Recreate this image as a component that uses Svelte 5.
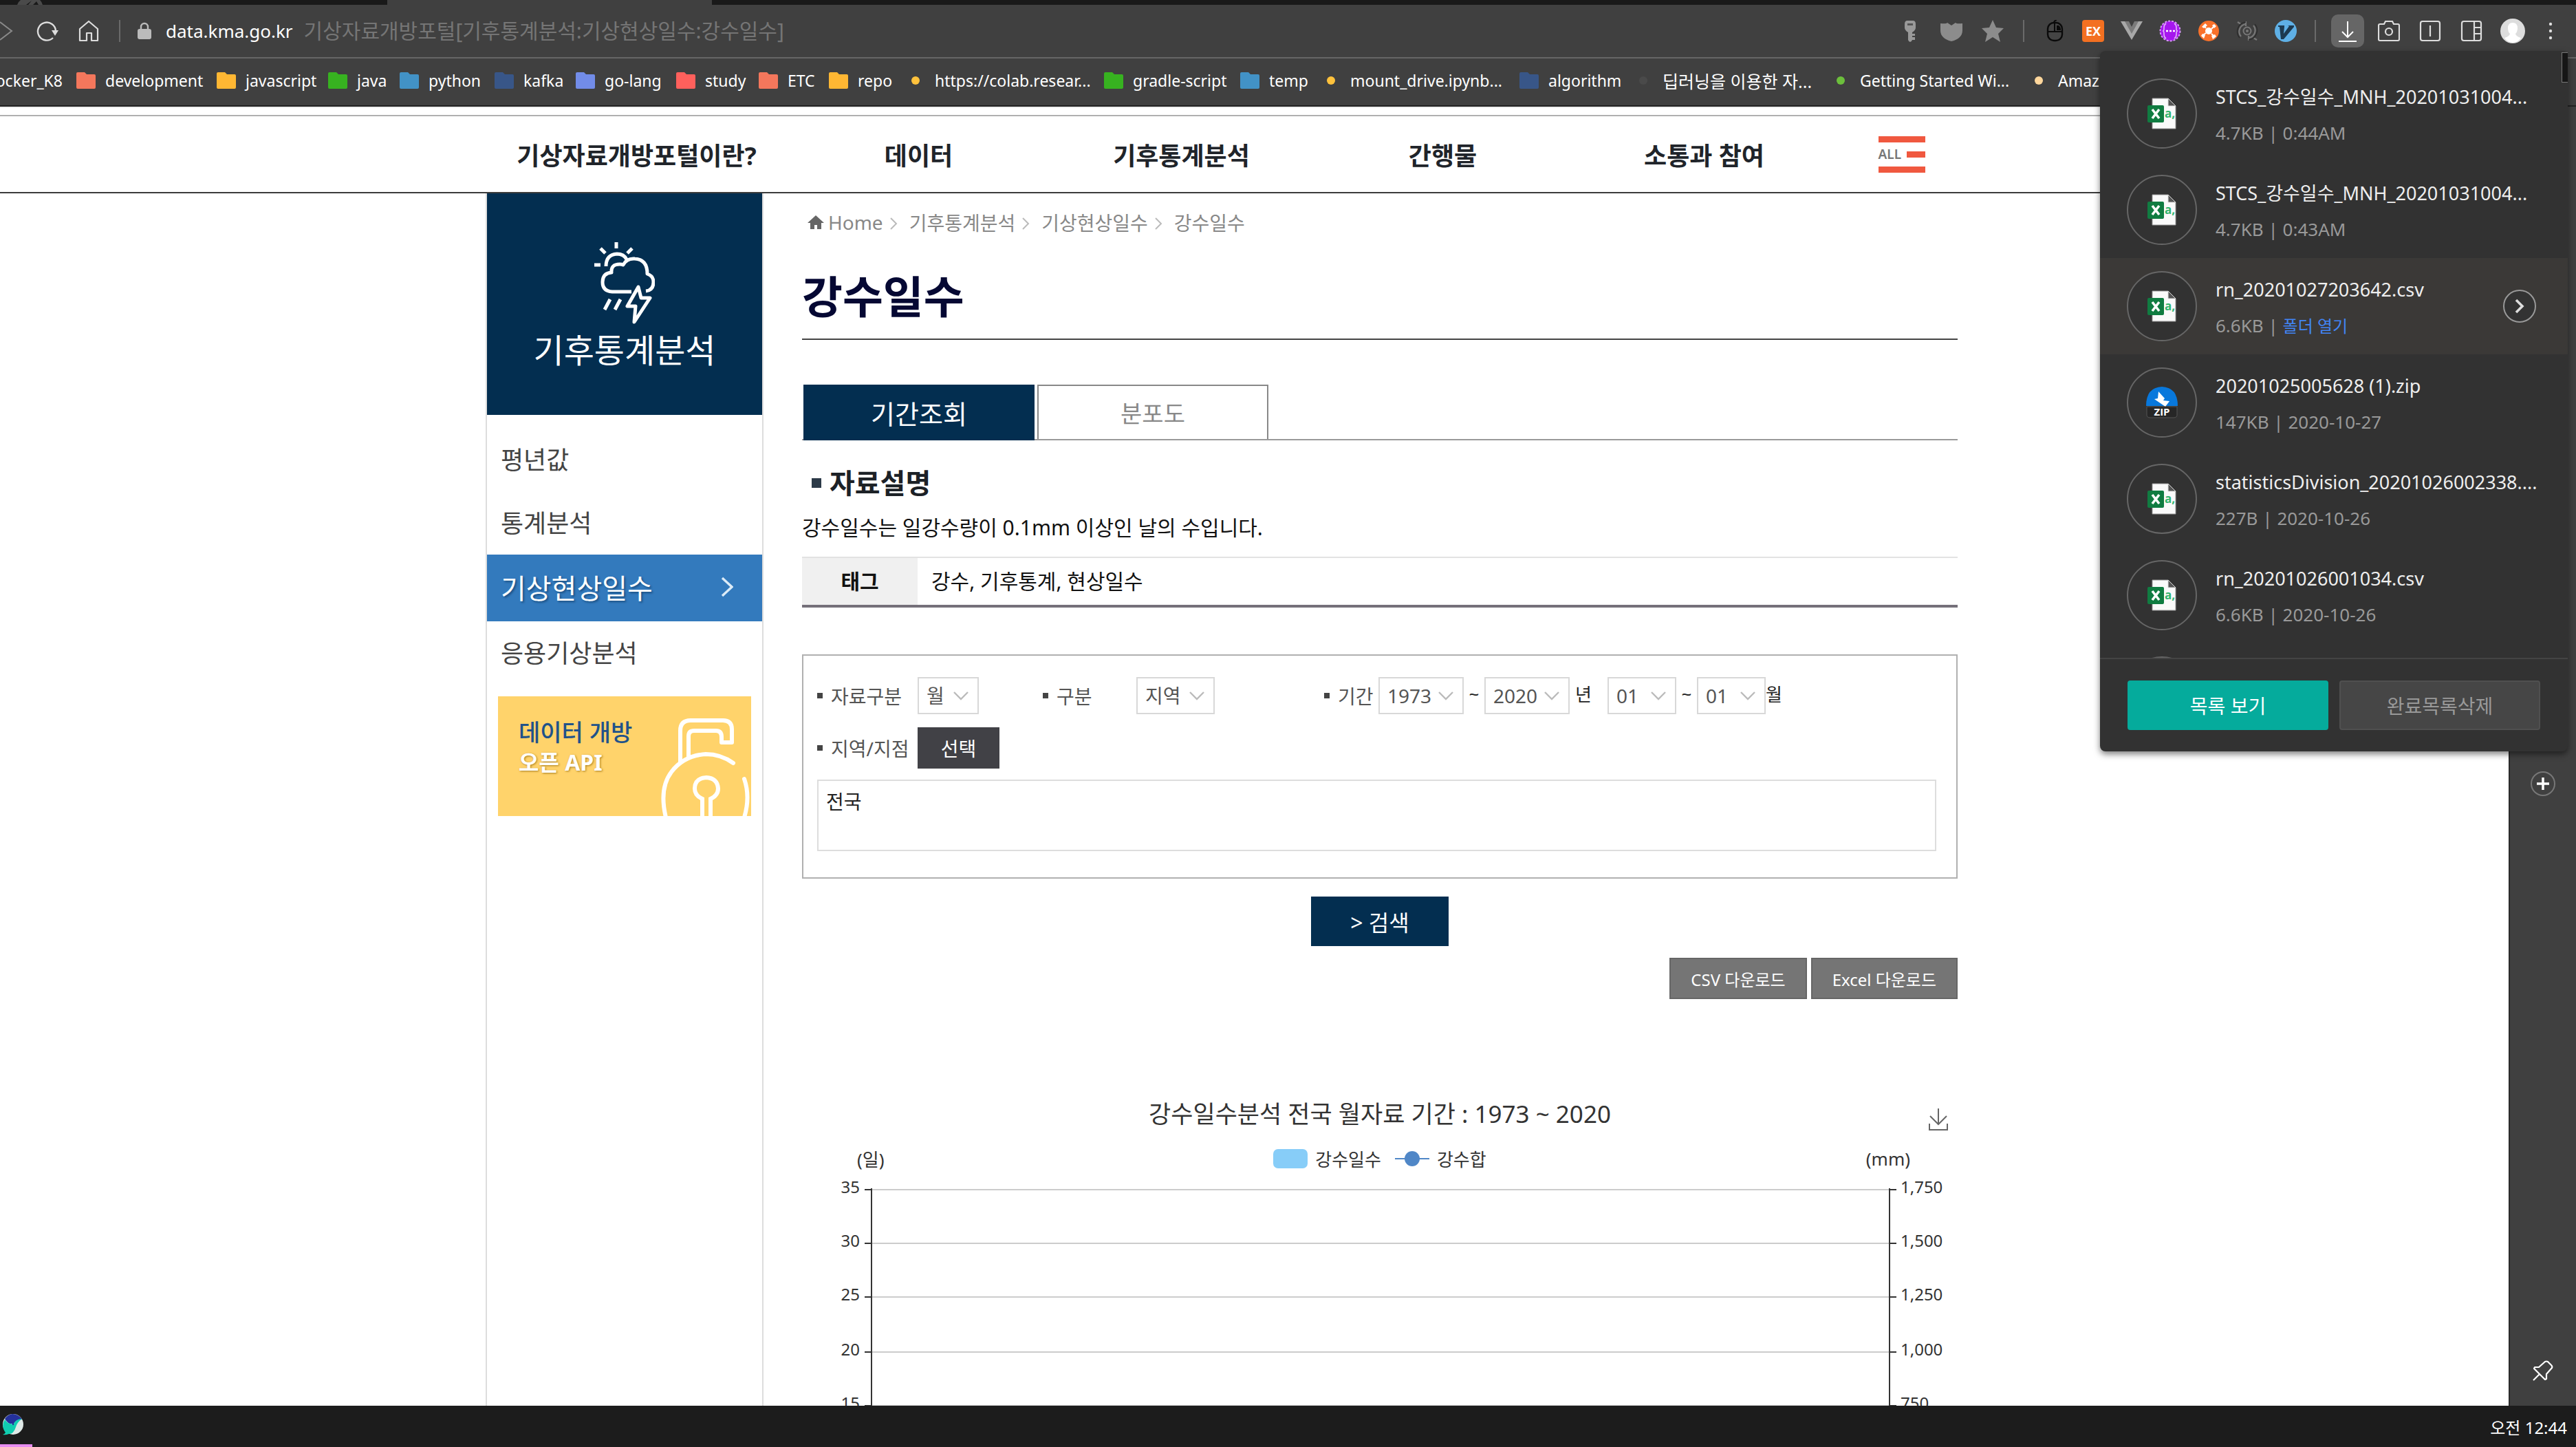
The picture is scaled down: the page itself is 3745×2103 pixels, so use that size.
<script>
  const bookmarks = [
    { label: 'ocker_K8', kind: 'none' },
    { label: 'development', kind: 'folder', color: '#f4775c' },
    { label: 'javascript', kind: 'folder', color: '#ffb733' },
    { label: 'java', kind: 'folder', color: '#37b220' },
    { label: 'python', kind: 'folder', color: '#4292c6' },
    { label: 'kafka', kind: 'folder', color: '#385688' },
    { label: 'go-lang', kind: 'folder', color: '#728ce8' },
    { label: 'study', kind: 'folder', color: '#ff605c' },
    { label: 'ETC', kind: 'folder', color: '#f4775c' },
    { label: 'repo', kind: 'folder', color: '#ffb733' },
    { label: 'https://colab.resear...', kind: 'dot', color: '#ffc23c' },
    { label: 'gradle-script', kind: 'folder', color: '#37b220' },
    { label: 'temp', kind: 'folder', color: '#4292c6' },
    { label: 'mount_drive.ipynb...', kind: 'dot', color: '#ffc23c' },
    { label: 'algorithm', kind: 'folder', color: '#385688' },
    { label: '딥러닝을 이용한 자...', kind: 'dot wide', color: '#4a4a4a' },
    { label: 'Getting Started Wi...', kind: 'dot', color: '#6cbf3c' },
    { label: 'Amaz', kind: 'dot', color: '#ffd79c' }
  ];

  const menus = ['기상자료개방포털이란?', '데이터', '기후통계분석', '간행물', '소통과 참여'];
  const crumbs = ['기후통계분석', '기상현상일수', '강수일수'];
  const sideItems = [
    { label: '평년값' },
    { label: '통계분석' },
    { label: '기상현상일수', active: true },
    { label: '응용기상분석' }
  ];

  const files = [
    { name: 'STCS_강수일수_MNH_20201031004...', size: '4.7KB', when: '0:44AM', type: 'csv' },
    { name: 'STCS_강수일수_MNH_20201031004...', size: '4.7KB', when: '0:43AM', type: 'csv' },
    { name: 'rn_20201027203642.csv', size: '6.6KB', type: 'csv', hover: true },
    { name: '20201025005628 (1).zip', size: '147KB', when: '2020-10-27', type: 'zip' },
    { name: 'statisticsDivision_20201026002338....', size: '227B', when: '2020-10-26', type: 'csv' },
    { name: 'rn_20201026001034.csv', size: '6.6KB', when: '2020-10-26', type: 'csv' }
  ];

  const ticks = [
    { left: '35', right: '1,750' },
    { left: '30', right: '1,500' },
    { left: '25', right: '1,250' },
    { left: '20', right: '1,000' },
    { left: '15', right: '750' }
  ].map((t, i) => ({ ...t, y: 28 + i * 78 + (i > 2 ? 2 : 0) }));
</script>

{#snippet pick(id, name, value, cls)}
  <span class="pick {cls}">
    <select {id} aria-label={name}><option>{value}</option></select>
    <svg viewBox="0 0 22 14" aria-hidden="true"><path d="M1 2l10 10L21 2" fill="none" stroke="#bbb" stroke-width="2.4" /></svg>
  </span>
{/snippet}

<div class="window">
  <div class="tabstrip">
    <svg class="tab-logo" viewBox="0 0 40 7" aria-hidden="true"><path d="M1 7q2-5 5-7h28q3 3 4 7h-6l-3-5-5 5h-7l5-6-8 6z" fill="#4a4a4a" /></svg>
    <div class="tab-active"></div>
  </div>

  <header class="toolbar">
    <button class="tb fwd" aria-label="앞으로"><svg viewBox="0 0 20 30"><path d="M0 2l17 13L0 28" fill="none" stroke="#8a8a8a" stroke-width="2" /></svg></button>
    <button class="tb" aria-label="새로고침"><svg class="i32" viewBox="0 0 32 32"><path d="M24 26A13 13 0 1 1 28 16" fill="none" stroke="#ddd" stroke-width="2.4" /><path d="M22 15h10l-5 8z" fill="#ddd" /></svg></button>
    <button class="tb" aria-label="홈"><svg class="i32" viewBox="0 0 32 32"><path d="M3 13L16 2l13 11v17h-9V19h-7v11H3z" fill="none" stroke="#ddd" stroke-width="2.2" stroke-linejoin="round" /></svg></button>
    <i class="divider"></i>
    <svg class="lock" viewBox="0 0 20 26" aria-hidden="true"><path d="M5 12V7a5 5 0 0 1 10 0v5" fill="none" stroke="#bbb" stroke-width="2.4" /><rect y="10" width="20" height="15" rx="3" fill="#bbb" /></svg>
    <div class="url"><span>data.kma.go.kr</span><span class="url-title">기상자료개방포털[기후통계분석:기상현상일수:강수일수]</span></div>

    <div class="tools">
      <button class="tool" aria-label="비밀번호"><svg class="i32" viewBox="0 0 32 32"><path d="M12 1h8q4 0 4 5v5q0 4-5 7v2h4v3h-4v2h4v4h-4q-1 3-3 3t-3-3V18q-5-3-5-7V6q0-5 4-5z" fill="#999" /><rect x="12" y="5" width="8" height="3" fill="#555" /></svg></button>
      <button class="tool" aria-label="보호"><svg class="i32" viewBox="0 0 32 32"><path d="M0 5q9 1 10-1l6 4 6-4q1 2 10 1v10q0 12-16 16Q0 27 0 15z" fill="#8c8c8c" /></svg></button>
      <button class="tool" aria-label="즐겨찾기"><svg class="i32" viewBox="0 0 32 32"><path d="M16 0l5 11 11 1-8 8 3 12-11-7-11 7 3-12-8-8 11-1z" fill="#8c8c8c" /></svg></button>
      <i class="divider wide"></i>
      <button class="tool ext" aria-label="마우스 제스처"><svg class="i32" viewBox="0 0 32 32"><rect x="6" y="4" width="21" height="26" rx="9" fill="#444" stroke="#0a0a0a" stroke-width="2.4" /><path d="M16 5v12M6 17h21M15 4q0-3 4-4" fill="none" stroke="#0a0a0a" stroke-width="2" /><path d="M19 8h3q3 2 3 7h-6z" fill="#0a0a0a" /></svg></button>
      <button class="tool ext" aria-label="EX"><span class="ex">EX</span></button>
      <button class="tool ext" aria-label="Vue"><svg class="i32" viewBox="0 0 32 32"><path d="M0 2h9l7 13 7-13h9L16 29z" fill="#a8a8a8" /><path d="M6 2h6l4 8 4-8h6L16 20z" fill="#7b7b7b" /></svg></button>
      <button class="tool ext" aria-label="확장 프로그램"><svg class="i32" viewBox="0 0 32 32"><circle cx="16" cy="16" r="14.5" fill="#a617ee" stroke="#d69af5" stroke-width="2" stroke-dasharray="3 2" /><path d="M10 5q-3 2-3 6v2q0 3-2 3 2 0 2 3v2q0 4 3 6M22 5q3 2 3 6v2q0 3 2 3-2 0-2 3v2q0 4-3 6" fill="none" stroke="#e0b0f8" stroke-width="1.6" /><path d="M10 16h3m2 0h3m2 0h3" stroke="#fff" stroke-width="2.6" /></svg></button>
      <button class="tool ext" aria-label="확장 프로그램 2"><svg class="i32" viewBox="0 0 32 32"><circle cx="16" cy="16" r="15" fill="#f9712a" /><circle cx="16" cy="16" r="5" fill="#fff" /><path d="M12 12L9 8M20 13l3-3M12 19l-4 3M20 20l3 3" stroke="#fff" stroke-width="2" /><path d="M6 10l5-5 3 3-5 4zM21 8l3-2 3 3-3 3zM7 20l4 2-2 5-4-4zM20 23l5-2 2 3-5 4z" fill="#fff" /></svg></button>
      <button class="tool ext" aria-label="동기화"><svg class="i32" viewBox="0 0 32 32"><circle cx="16" cy="16" r="5.5" fill="none" stroke="#777" stroke-width="2" /><circle cx="16" cy="16" r="2" fill="#777" /><path d="M14 2v7M14 6A11 11 0 0 0 7 24M2 3l5 3M18 30v-7M18 26A11 11 0 0 0 25 8M30 29l-5-3" fill="none" stroke="#777" stroke-width="2.2" /><path d="M14 3A14 14 0 0 0 5 26M18 29A14 14 0 0 0 27 6" fill="none" stroke="#2c2c2c" stroke-width="1.4" /></svg></button>
      <button class="tool ext" aria-label="V"><svg class="i32" viewBox="0 0 32 32"><circle cx="16" cy="16" r="16" fill="#5fb0e6" /><path d="M5 8h9v2l-1 10 8-11-2-1h9v2L13 28h-4L7 10H5z" fill="#1d3a50" /></svg></button>
      <i class="divider wide"></i>
      <button class="tool on" aria-label="다운로드"><svg class="i32" viewBox="0 0 32 32"><path d="M16 2v23M8 17l8 8 8-8M3 31h26" fill="none" stroke="#fff" stroke-width="2" /></svg></button>
      <button class="tool" aria-label="캡처"><svg class="i32" viewBox="0 0 32 32"><path d="M3 6h6l2-4h10l2 4h6q2 0 2 2v20q0 2-2 2H3q-2 0-2-2V8q0-2 2-2z" fill="none" stroke="#ddd" stroke-width="2.2" /><circle cx="16" cy="17" r="5" fill="none" stroke="#ddd" stroke-width="2.2" /></svg></button>
      <button class="tool" aria-label="듀얼탭"><svg class="i32" viewBox="0 0 32 32"><rect x="2" y="2" width="28" height="28" rx="3" fill="none" stroke="#ddd" stroke-width="2.2" /><path d="M16 8v16" stroke="#ddd" stroke-width="2.2" /></svg></button>
      <button class="tool" aria-label="사이드바"><svg class="i32" viewBox="0 0 32 32"><rect x="2" y="2" width="28" height="28" rx="3" fill="none" stroke="#ddd" stroke-width="2.2" /><path d="M20 2v28M20 11h10M20 20h10" stroke="#ddd" stroke-width="2.2" /></svg></button>
      <button class="tool" aria-label="프로필"><svg class="i36" viewBox="0 0 36 36"><circle cx="18" cy="18" r="18" fill="#ddd" /><path d="M18 6q7 0 7 8 0 5-3 8 1 4 8 6-5 7-12 7T6 28q7-2 8-6-3-3-3-8 0-8 7-8z" fill="#fff" /></svg></button>
      <button class="tool" aria-label="더보기"><svg class="i32" viewBox="0 0 32 32"><circle cx="11" cy="6" r="2.2" fill="#ddd" /><circle cx="11" cy="16" r="2.2" fill="#ddd" /><circle cx="11" cy="26" r="2.2" fill="#ddd" /></svg></button>
    </div>
  </header>

  <nav class="bookmarks" aria-label="북마크">
    {#each bookmarks as b}
      <a href="#bookmark" class="bookmark {b.kind}">
        {#if b.kind === 'folder'}
          <svg viewBox="0 0 28 24" aria-hidden="true"><path d="M2 0h10l3 3h11q2 0 2 2v17q0 2-2 2H2q-2 0-2-2V2q0-2 2-2z" fill={b.color} /></svg>
        {:else if b.kind !== 'none'}
          <svg viewBox="0 0 28 24" aria-hidden="true"><circle cx="14" cy="12" r="6" fill={b.color} /></svg>
        {/if}
        <span>{b.label}</span>
      </a>
    {/each}
  </nav>

  <div class="body">
    <div class="page">
      <div class="gnb">
        <nav class="wrap gnb-list" aria-label="주 메뉴">
          {#each menus as m}<a href="#menu">{m}</a>{/each}
          <button class="all" aria-label="전체 메뉴"><i></i><span>ALL<i></i></span><i></i></button>
        </nav>
      </div>

      <div class="lower">
      <div class="wrap columns">
        <aside class="side">
          <div class="side-head">
            <svg viewBox="0 0 88 120" aria-hidden="true">
              <g fill="none" stroke="#fff" stroke-width="5" stroke-linejoin="round">
                <path d="M32 0v9M9 9l7 7M55 9l-7 7M0 33h9" />
                <path d="M17 35q0-17 16-18 10 0 14 8" />
                <path d="M54 72H26Q12 71 12 58t13-14q-1-12 12-12 3 0 5 1 5-10 17-9 18 1 18 22 9 3 9 12 0 12-11 13" />
                <path d="M64 65L48 93h12l-2 23 23-35H68z" />
                <path d="M23 83l-8 15M38 83l-8 15" />
              </g>
            </svg>
            <strong>기후통계분석</strong>
          </div>
          <nav class="side-nav" aria-label="기후통계분석">
            {#each sideItems as s}
              <a href="#side" class:active={s.active}>{s.label}{#if s.active}<svg viewBox="0 0 18 30" aria-hidden="true"><path d="M2 2l14 13L2 28" fill="none" stroke="#dcebf7" stroke-width="3.4" /></svg>{/if}</a>
            {/each}
          </nav>
          <a href="#api" class="banner">
            <span class="banner-text"><b>데이터 개방</b><b class="light">오픈 API</b></span>
            <svg viewBox="0 0 132 142" aria-hidden="true">
              <g fill="none" stroke="#fff" stroke-width="6">
                <path d="M29 64V18Q29 3 44 3h47q13 0 13 13v19H89V27q0-9-8-9H49q-8 0-8 8v32" stroke-linejoin="round" />
                <path d="M106 65Q88 52 66 52 34 54 16 78T8 144M122 88q9 26 0 56" stroke-linecap="round" />
                <path d="M61 146v-29q-11-5-11-15 0-15 17-16 16 1 17 16 0 10-11 15v29" />
              </g>
            </svg>
          </a>
        </aside>

        <main class="content">
          <nav class="crumbs" aria-label="현재 위치">
            <a href="#home"><svg class="home" viewBox="0 0 24 20" aria-hidden="true"><path d="M12 0l12 11h-4v9h-6v-6h-4v6H4v-9H0z" fill="#666" /></svg>Home</a>
            {#each crumbs as c}
              <svg class="sep" viewBox="0 0 12 20" aria-hidden="true"><path d="M2 2l8 8-8 8" fill="none" stroke="#bbb" stroke-width="2" /></svg>
              <a href="#crumb">{c}</a>
            {/each}
          </nav>
          <h1>강수일수</h1>

          <div class="tabs" role="tablist">
            <button role="tab" aria-selected="true" class="tab sel">기간조회</button>
            <button role="tab" aria-selected="false" class="tab">분포도</button>
          </div>

          <h2>자료설명</h2>
          <p class="desc">강수일수는 일강수량이 0.1mm 이상인 날의 수입니다.</p>
          <table class="tags"><tbody><tr><th scope="row">태그</th><td>강수, 기후통계, 현상일수</td></tr></tbody></table>

          <form class="search" onsubmit={(e) => e.preventDefault()}>
            <div class="row">
              <label class="lab" for="kind">자료구분</label>
              {@render pick('kind', '자료구분', '월', 'w1')}
              <label class="lab second" for="area">구분</label>
              {@render pick('area', '구분', '지역', 'w2')}
              <label class="lab third" for="from">기간</label>
              {@render pick('from', '시작 연도', '1973', 'w4')}
              <span class="tilde">~</span>
              {@render pick('to', '종료 연도', '2020', 'w4')}
              <span class="year">년</span>
              {@render pick('m1', '시작 월', '01', 'w3')}
              <span class="tilde">~</span>
              {@render pick('m2', '종료 월', '01', 'w3')}
              <span class="month">월</span>
            </div>
            <div class="row second-row">
              <label class="lab" for="place">지역/지점</label>
              <button type="button" class="choose">선택</button>
            </div>
            <textarea id="place" value="전국"></textarea>
          </form>

          <button class="go">&gt; 검색</button>
          <div class="exports">
            <button>CSV 다운로드</button>
            <button>Excel 다운로드</button>
          </div>

          <section class="chart">
            <div class="chart-head">
              <h3>강수일수분석 전국 월자료 기간 : 1973 ~ 2020</h3>
              <button aria-label="이미지 저장"><svg viewBox="0 0 28 32" aria-hidden="true"><path d="M14 0v23M2 11l12 12 12-12M1 22v9h26v-9" fill="none" stroke="#666" stroke-width="2" /></svg></button>
            </div>
            <div class="chart-legend">
              <span class="unit">(일)</span>
              <span class="key"><svg viewBox="0 0 50 28" aria-hidden="true"><rect width="50" height="28" rx="7" fill="#87cdf8" /></svg>강수일수</span>
              <span class="key"><svg viewBox="0 0 50 28" aria-hidden="true"><path d="M0 14h50" stroke="#5087c7" stroke-width="2" /><circle cx="25" cy="14" r="11" fill="#5087c7" /></svg>강수합</span>
              <span class="unit right">(mm)</span>
            </div>
            <svg class="plot" viewBox="0 0 1680 440" role="img" aria-label="강수일수와 강수합 축">
              {#each ticks as t}
                <path d="M101 {t.y}H1581" stroke="#ccc" stroke-width="2" />
                <path d="M91 {t.y}h10M1581 {t.y}h10" stroke="#333" stroke-width="2" />
                <text x="84" y={t.y + 5} text-anchor="end">{t.left}</text>
                <text x="1597" y={t.y + 5}>{t.right}</text>
              {/each}
              <path d="M101 26V440M1581 26V440" stroke="#333" stroke-width="2" />
            </svg>
          </section>
        </main>
      </div>
      </div>
    </div>

    <aside class="rail">
      <button aria-label="추가"><svg class="i38" viewBox="0 0 38 38"><circle cx="19" cy="19" r="17" fill="none" stroke="#777" stroke-width="2" /><path d="M19 10v18M10 19h18" stroke="#fff" stroke-width="3.5" /></svg></button>
      <button aria-label="고정"><svg class="i32" viewBox="0 0 32 32"><path d="M2 30l9-9M3 13l16 16 2-1v-7l8-9q1-2-1-4l-5-5q-2-1-4 0l-9 8H4z" fill="none" stroke="#fff" stroke-width="2.2" stroke-linejoin="round" /></svg></button>
    </aside>
  </div>

  <footer class="taskbar">
    <button class="whale" aria-label="Whale"><svg viewBox="0 0 32 32"><circle cx="16" cy="15" r="15" fill="#dfe9e7" /><path d="M4 7q4-6 11-7 9 0 14 8-8-1-12 6-8 2-13-7z" fill="#24319c" /><path d="M4 8q5 8 13 6 4-7 12-7-7 5-9 12-3 10-10 10-5 2-9 1 3-1 4-3Q-2 18 4 8z" fill="#10cdb0" /><circle cx="16" cy="15" r="1.2" fill="#24319c" /></svg></button>
    <time>오전 12:44</time>
  </footer>

  <section class="downloads" aria-label="다운로드">
    <ul>
      {#each files as f}
        <li class:hover={f.hover}>
          <span class="badge">
            {#if f.type === 'csv'}
              <svg viewBox="0 0 42 46" aria-hidden="true">
                <path d="M7 1h23l11 11v33H7z" fill="#fafafa" stroke="#999" />
                <path d="M30 1v11h11z" fill="#555" stroke="#ddd" />
                <rect y="11" width="24" height="25" rx="2" fill="#107c41" />
                <path d="M7 17l10 13M17 17L7 30" stroke="#fff" stroke-width="3.6" />
                <text x="25" y="29" class="csv">a,</text>
              </svg>
            {:else}
              <svg class="zip" viewBox="0 0 46 46" aria-hidden="true">
                <path d="M0 28Q0 1 23 0q23 1 23 28z" fill="#0878dc" />
                <path d="M18 7l9 10-2 3 9 1-6 8-16-11 5-1z" fill="#fff" />
                <path d="M1 29h44v12q0 4-5 4H6q-5 0-5-4z" fill="#262626" stroke="#555" />
                <text x="23" y="42" text-anchor="middle" class="zt">ZIP</text>
              </svg>
            {/if}
          </span>
          <div class="info">
            <p class="name">{f.name}</p>
            <p class="meta">{f.size} | {#if f.hover}<a href="#folder">폴더 열기</a>{:else}{f.when}{/if}</p>
          </div>
          {#if f.hover}
            <button class="next" aria-label="열기"><svg viewBox="0 0 48 48"><circle cx="24" cy="24" r="23" fill="#333" stroke="#999" stroke-width="2" /><path d="M19 15l9 9-9 9" fill="none" stroke="#ddd" stroke-width="3.6" /></svg></button>
          {/if}
        </li>
      {/each}
      <li aria-hidden="true"><span class="badge"></span></li>
    </ul>
    <i class="thumb"></i>
    <div class="actions">
      <button class="primary">목록 보기</button>
      <button>완료목록삭제</button>
    </div>
  </section>
</div>

<style>
  :global(body) { margin: 0; overflow: hidden; }
  .window, .window :global(*) { box-sizing: border-box; }
  .window {
    position: relative; display: flex; flex-direction: column; height: 100vh;
    font-family: "Noto Sans", "Noto Sans CJK KR", sans-serif; color: #222; background: #fff;
  }
  button { border: 0; padding: 0; margin: 0; background: none; font: inherit; color: inherit; }
  a { color: inherit; text-decoration: none; }
  svg { display: block; flex: none; }
  p, h1, h2, h3, ul { margin: 0; padding: 0; }
  .i32 { width: 32px; height: 32px; }
  .i36 { width: 36px; height: 36px; }
  .i38 { width: 38px; height: 38px; }

  .tabstrip { display: flex; flex: none; height: 7px; background: #191919; }
  .tab-logo { width: 40px; height: 7px; margin-left: 24px; }
  .tab-active { width: 472px; margin-left: 499px; background: #404040; }

  .toolbar { display: flex; flex: none; align-items: center; height: 78px; background: #404040; border-bottom: 2px solid #666; }
  .tb { display: grid; place-items: center; width: 60px; height: 48px; }
  .fwd { width: 39px; justify-items: start; }
  .fwd svg { width: 20px; height: 30px; }
  .divider { flex: none; width: 2px; height: 32px; margin-left: 14px; background: #6a6a6a; }
  .divider.wide { margin: 0 16px 0 14px; }
  .lock { width: 20px; height: 26px; margin-left: 25px; }
  .url { display: flex; flex: 1; align-items: center; gap: 16px; margin-left: 21px; font-size: 26px; line-height: 40px; color: #fff; white-space: nowrap; }
  .url-title { font-size: 30px; color: #757575; }
  .tools { display: flex; align-items: center; padding-right: 2px; }
  .tool { display: grid; place-items: center; width: 60px; height: 48px; }
  .tool.ext { width: 56px; }
  .tool.on { width: 48px; margin: 0 6px; border-radius: 10px; background: #666; }
  .ex { width: 32px; border-radius: 4px; background: #f37021; color: #fff; font: 700 18px/32px "Open Sans", sans-serif; text-align: center; }

  .bookmarks {
    display: grid; flex: none; height: 70px; overflow: hidden; background: #404040; border-bottom: 2px solid #222;
    grid-template-columns: 111px 204px 162px 104px 138px 118px 146px 120px 102px 112px 288px 198px 118px 288px 166px 287px 288px 1fr;
    padding-bottom: 4px;
  }
  .bookmark { display: flex; align-items: center; gap: 14px; min-width: 0; font-size: 23px; color: #fff; white-space: nowrap; }
  .bookmark.wide { font-size: 25px; }
  .bookmark svg { width: 28px; height: 24px; }
  .bookmark.none { justify-content: flex-end; padding-right: 20px; }

  .body { display: flex; flex: 1; min-height: 0; }
  .page { flex: 1; min-width: 0; overflow: hidden; border-top: 2px solid #eee; }
  .wrap { max-width: 2140px; margin: 0 auto; }
  .gnb { margin-top: 10px; padding-right: 92px; border-top: 2px solid #b0b0b0; border-bottom: 2px solid #3c3c3c; }
  .gnb-list { display: grid; grid-template-columns: 436fr 384fr 380fr 380fr 380fr 180fr; height: 110px; align-items: center; justify-items: center; font-size: 36px; font-weight: 700; color: #20242a; }
  .all { display: flex; flex-direction: column; gap: 13px; width: 68px; margin-left: 14px; }
  .all i { display: block; height: 9px; width: 100%; background: #f0583f; }
  .all span { display: flex; align-items: center; justify-content: space-between; height: 9px; font-size: 19px; font-weight: 600; color: #777; }
  .all span i { width: 27px; }

  .lower { padding-right: 95px; }
  .columns { display: flex; align-items: stretch; }
  .side { flex: none; width: 404px; min-height: 1800px; border: solid #ddd; border-width: 0 2px; }
  .side-head { display: flex; flex-direction: column; align-items: center; height: 322px; padding-top: 71px; background: #032e50; color: #fff; }
  .side-head svg { width: 88px; height: 120px; }
  .side-head strong { margin-top: 5px; font-size: 48px; line-height: 64px; font-weight: 400; }
  .side-nav { padding-top: 19px; font-size: 36px; color: #444; }
  .side-nav a { display: flex; align-items: center; justify-content: space-between; height: 92px; padding: 0 42px 4px 20px; }
  .side-nav a.active { height: 97px; background: #337abd; color: #fff; font-size: 40px; text-shadow: 2px 2px 3px #1b4f80; }
  .side-nav svg { width: 18px; height: 30px; }
  .banner { display: flex; justify-content: space-between; height: 174px; margin: 17px 16px 0; background: #ffd36b; overflow: hidden; }
  .banner-text { display: flex; flex-direction: column; padding: 30px 0 0 30px; font-size: 34px; line-height: 44px; color: #21528a; }
  .banner-text b { font-weight: 500; }
  .banner-text .light { color: #fff; font-weight: 700; font-size: 32px; text-shadow: 1px 1px 3px #a77d20; }
  .banner svg { width: 132px; height: 142px; margin-top: 32px; }

  .content { flex: 1; min-width: 0; margin-left: 56px; }
  .crumbs { display: flex; align-items: center; height: 40px; margin-top: 22px; padding-left: 8px; font-size: 28px; color: #888; }
  .crumbs a { display: flex; align-items: center; gap: 6px; }
  .home { width: 24px; height: 20px; }
  .sep { width: 12px; height: 20px; margin: 4px 17px 0 9px; }
  h1 { margin-top: 48px; padding-bottom: 21px; border-bottom: 2px solid #444; font-size: 64px; line-height: 80px; font-weight: 700; color: #050833; }
  .tabs { display: flex; gap: 4px; height: 81px; margin-top: 65px; padding-left: 2px; border-bottom: 2px solid #999; }
  .tab { width: 336px; border: 2px solid #888; border-bottom: 0; font-size: 34px; color: #888; }
  .tab.sel { height: 81px; border: 0; background: #032e50; color: #fff; font-size: 38px; }
  h2 { display: flex; align-items: center; gap: 12px; margin-top: 38px; padding-left: 14px; font-size: 40px; line-height: 48px; color: #1c2126; }
  h2::before { content: ""; width: 14px; height: 14px; background: #2c3a48; }
  .desc { margin-top: 21px; font-size: 30px; line-height: 40px; color: #111; }
  .tags { width: 100%; margin-top: 22px; border-collapse: separate; border-spacing: 0; border-top: 2px solid #e2e2e2; border-bottom: 4px solid #75707a; font-size: 30px; line-height: 40px; color: #111; }
  .tags th { width: 168px; height: 68px; padding: 0; background: #f0f0f0; }
  .tags td { padding: 0 20px; }

  .search { margin-top: 68px; padding: 31px 29px 38px 20px; border: 2px solid #b0b0b0; font-size: 28px; }
  .row { display: flex; align-items: center; height: 54px; }
  .second-row { height: 60px; margin: 19px 0 16px; }
  .lab { display: flex; align-items: center; gap: 12px; width: 146px; color: #555; white-space: nowrap; }
  .lab::before { content: ""; width: 8px; height: 8px; background: #444; }
  .lab.second { width: 136px; margin-left: 93px; }
  .lab.third { width: 79px; margin-left: 159px; }
  .pick { position: relative; display: block; height: 54px; }
  .pick select { appearance: none; width: 100%; height: 100%; padding: 0 0 0 11px; border: 2px solid #d8d8d8; border-radius: 0; background: #fff; color: #555; font: inherit; }
  .pick svg { position: absolute; right: 15px; top: 20px; width: 22px; height: 14px; pointer-events: none; }
  .w1 { width: 89px; }
  .w2 { width: 114px; }
  .w3 { width: 100px; }
  .w4 { width: 124px; }
  .tilde, .year, .month { padding-bottom: 6px; font-size: 26px; }
  .tilde { width: 30px; text-align: center; }
  .year { width: 55px; padding-left: 8px; }
  .choose { width: 119px; height: 60px; background: #414146; color: #fff; }
  textarea { display: block; width: 100%; height: 104px; padding: 8px 11px; border: 2px solid #ddd; resize: none; font: inherit; line-height: 44px; color: #222; }
  .go { display: block; width: 200px; height: 72px; margin: 26px auto 0; background: #032e50; color: #fff; font-size: 32px; }
  .exports { display: flex; justify-content: flex-end; gap: 6px; margin-top: 17px; }
  .exports button { height: 60px; padding: 0 29px; border: 2px solid #666; background: #757575; color: #fff; font-size: 24px; }

  .chart { margin-top: 143px; color: #333; }
  .chart-head { display: grid; grid-template-columns: 1fr auto 1fr; align-items: center; height: 48px; }
  .chart-head h3 { grid-column: 2; font-size: 35px; line-height: 48px; font-weight: 400; }
  .chart-head button { justify-self: end; margin: 16px 14px 0 0; }
  .chart-head button svg { width: 28px; height: 32px; }
  .chart-legend { display: grid; grid-template-columns: 1fr auto auto 1fr; align-items: center; gap: 20px; height: 32px; margin-top: 22px; font-size: 26px; }
  .key { display: flex; align-items: center; gap: 11px; }
  .key svg { width: 50px; height: 28px; }
  .unit { padding-left: 80px; }
  .unit.right { padding: 0 69px 0 0; text-align: right; }
  .plot { width: 100%; margin-top: 4px; overflow: visible; }
  .plot text { font-size: 24px; fill: #333; }

  .rail { display: flex; flex: none; flex-direction: column; align-items: center; justify-content: space-between; width: 98px; padding: 965px 0 35px; border-left: 2px solid #2a2a2a; background: #404040; }

  .taskbar { display: flex; flex: none; align-items: center; justify-content: space-between; height: 60px; padding-right: 13px; background: #1c1c1c; color: #fff; font-size: 24px; }
  .whale { display: flex; align-items: center; width: 47px; height: 60px; padding-left: 3px; border-bottom: 4px solid #e68cf0; }
  .whale svg { width: 32px; height: 32px; }

  .downloads { position: absolute; top: 74px; right: 12px; width: 680px; border-radius: 8px; background: #323232; box-shadow: 0 4px 10px rgba(0, 0, 0, 0.5); }
  .downloads ul { height: 884px; padding-top: 21px; overflow: hidden; border-bottom: 2px solid #444; list-style: none; }
  .downloads li { display: flex; align-items: center; height: 140px; padding: 0 46px 0 39px; }
  .downloads li.hover { background: #3b3937; }
  .badge { display: grid; flex: none; place-items: center; width: 102px; height: 102px; border: 2px solid #666; border-radius: 50%; background: #323232; }
  .badge svg { width: 42px; height: 46px; }
  .badge .zip { width: 46px; height: 46px; }
  .csv { font: 700 17px "Open Sans", sans-serif; fill: #33b56f; }
  .zt { font: 700 15px "Open Sans", sans-serif; fill: #fff; }
  .info { flex: 1; min-width: 0; margin-left: 27px; padding-top: 4px; white-space: nowrap; }
  .name { font-size: 27px; line-height: 52px; color: #eee; }
  .meta { font-size: 26px; line-height: 52px; color: #999; }
  .meta a { font-size: 24px; color: #4285f4; }
  .next svg { width: 48px; height: 48px; }
  .thumb { position: absolute; top: 2px; right: 0; width: 9px; height: 44px; border: solid #777; border-width: 1px 0 1px 1px; background: #161616; }
  .actions { display: flex; gap: 16px; padding: 31px 40px; }
  .actions button { flex: 1; height: 72px; border: 2px solid #505050; border-radius: 4px; background: #464646; color: #999; font-size: 28px; }
  .actions .primary { border-color: #05ab9c; background: #05ab9c; color: #fff; }
</style>
